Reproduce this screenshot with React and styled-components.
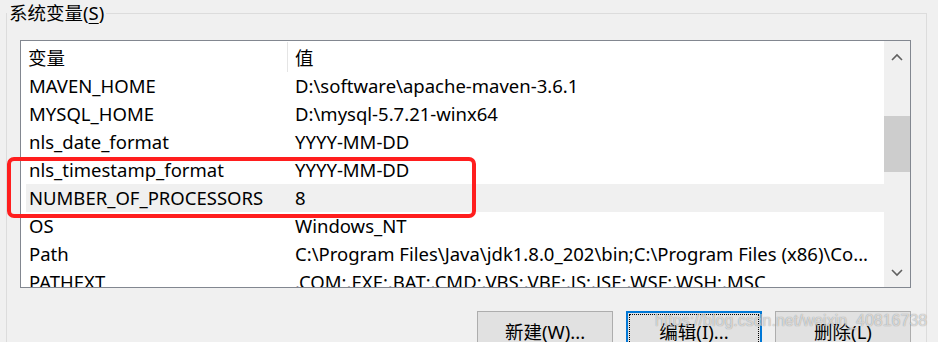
import React from "react";
import styled, { createGlobalStyle } from "styled-components";

const Global = createGlobalStyle`
  html, body { margin: 0; padding: 0; background: #f0f0f0; }
  body { font-family: "Noto Sans", "Noto Sans CJK SC", sans-serif; color: #000; }
`;

const Page = styled.div`
  position: relative;
  width: 938px;
  height: 342px;
  overflow: hidden;
  background: #f0f0f0;
  display: flex;
  flex-direction: column;
`;

const GroupBox = styled.section`
  position: relative;
  box-sizing: border-box;
  margin: 13px 0 0 6px;
  width: 921px;
  height: 400px;
  border: 1px solid #dcdcdc;
  padding: 26px 15px 0 13px;
  display: flex;
  flex-direction: column;
`;

const Legend = styled.div`
  position: absolute;
  top: -13px;
  left: 0px;
  padding: 0 2px;
  background: #f0f0f0;
  font-size: 18.5px;
  line-height: 24px;
`;

const Key = styled.span`
  text-decoration: underline;
  text-underline-offset: 3px;
  text-decoration-thickness: 1px;
`;

const ListBox = styled.div`
  box-sizing: border-box;
  width: 891px;
  height: 248px;
  border: 1px solid #828790;
  background: #fff;
  display: grid;
  grid-template-columns: 1fr 26px;
  overflow: hidden;
`;

const Content = styled.div`
  overflow: hidden;
  display: flex;
  flex-direction: column;
`;

const Header = styled.div`
  display: grid;
  grid-template-columns: 267px 1fr;
  height: 31px;
  flex: none;
  font-size: 18.5px;
`;

const HeaderCell = styled.div`
  box-sizing: border-box;
  padding-left: 7px;
  display: flex;
  align-items: center;
  border-right: ${(p) => (p.$sep ? "1px solid #e5e5e5" : "none")};
  margin: 1px 0 0;
`;

const Row = styled.div`
  display: grid;
  grid-template-columns: 266px 1fr;
  height: 28px;
  flex: none;
  margin-left: 5px;
  background: ${(p) => (p.$selected ? "#f0f0f0" : "transparent")};
  font-size: 18.5px;
  line-height: 28px;
`;

const Cell = styled.div`
  padding-left: 3px;
  white-space: nowrap;
  overflow: hidden;
`;

const ScrollBar = styled.div`
  background: #f0f0f0;
  display: flex;
  flex-direction: column;
`;

const ArrowBtn = styled.div`
  height: ${(p) => p.$h}px;
  flex: none;
  display: flex;
  align-items: center;
  justify-content: center;
`;

const Track = styled.div`
  flex: 1;
  display: flex;
  flex-direction: column;
`;

const Thumb = styled.div`
  margin-top: 43px;
  height: 56px;
  background: #cdcdcd;
`;

const ButtonRow = styled.div`
  display: flex;
  justify-content: flex-end;
  gap: 13px;
  margin-top: 23px;
  width: 891px;
`;

const Button = styled.button`
  box-sizing: border-box;
  width: 136px;
  height: 40px;
  background: #e1e1e1;
  border: ${(p) => (p.$focused ? "2px solid #0078d7" : "1px solid #adadad")};
  outline: ${(p) => (p.$focused ? "1px dotted #000" : "none")};
  outline-offset: -4px;
  font-family: "Noto Sans", "Noto Sans CJK SC", sans-serif;
  font-size: 18.5px;
  color: #000;
  padding: 0;
  display: flex;
  align-items: center;
  justify-content: center;
`;

const Annotation = styled.div`
  position: absolute;
  left: 7px;
  top: 157px;
  width: 469px;
  height: 61px;
  box-sizing: border-box;
  border: 4.5px solid #ff1e1e;
  border-radius: 7px;
  pointer-events: none;
`;

const Watermark = styled.div`
  position: absolute;
  left: 655px;
  top: 312px;
  font-family: "Liberation Sans", Arial, sans-serif;
  font-size: 16px;
  color: rgba(255, 255, 255, 0.65);
  text-shadow: 0 0 1px rgba(0, 0, 0, 0.45);
  pointer-events: none;
  white-space: nowrap;
`;

const Chevron = ({ up }) => (
  <svg width="12" height="8" viewBox="0 0 12 8">
    <polyline
      points={up ? "1,7 6,2 11,7" : "1,1 6,6 11,1"}
      fill="none"
      stroke="#606060"
      strokeWidth="1.6"
    />
  </svg>
);

const rows = [
  ["MAVEN_HOME", "D:\\software\\apache-maven-3.6.1"],
  ["MYSQL_HOME", "D:\\mysql-5.7.21-winx64"],
  ["nls_date_format", "YYYY-MM-DD"],
  ["nls_timestamp_format", "YYYY-MM-DD"],
  ["NUMBER_OF_PROCESSORS", "8", true],
  ["OS", "Windows_NT"],
  ["Path", "C:\\Program Files\\Java\\jdk1.8.0_202\\bin;C:\\Program Files (x86)\\Co..."],
  ["PATHEXT", ".COM;.EXE;.BAT;.CMD;.VBS;.VBE;.JS;.JSE;.WSF;.WSH;.MSC"],
];

export default function App() {
  return (
    <>
      <Global />
      <Page>
        <GroupBox>
          <Legend>
            系统变量(<Key>S</Key>)
          </Legend>
          <ListBox>
            <Content>
              <Header>
                <HeaderCell $sep>变量</HeaderCell>
                <HeaderCell>值</HeaderCell>
              </Header>
              {rows.map(([k, v, sel]) => (
                <Row key={k} $selected={sel}>
                  <Cell>{k}</Cell>
                  <Cell>{v}</Cell>
                </Row>
              ))}
            </Content>
            <ScrollBar>
              <ArrowBtn $h={32}>
                <Chevron up />
              </ArrowBtn>
              <Track>
                <Thumb />
              </Track>
              <ArrowBtn $h={28}>
                <Chevron />
              </ArrowBtn>
            </ScrollBar>
          </ListBox>
          <ButtonRow>
            <Button>
              新建(<Key>W</Key>)...
            </Button>
            <Button $focused>
              编辑(<Key>I</Key>)...
            </Button>
            <Button>
              删除(<Key>L</Key>)
            </Button>
          </ButtonRow>
        </GroupBox>
        <Annotation />
        <Watermark>https://blog.csdn.net/weixin_40816738</Watermark>
      </Page>
    </>
  );
}
